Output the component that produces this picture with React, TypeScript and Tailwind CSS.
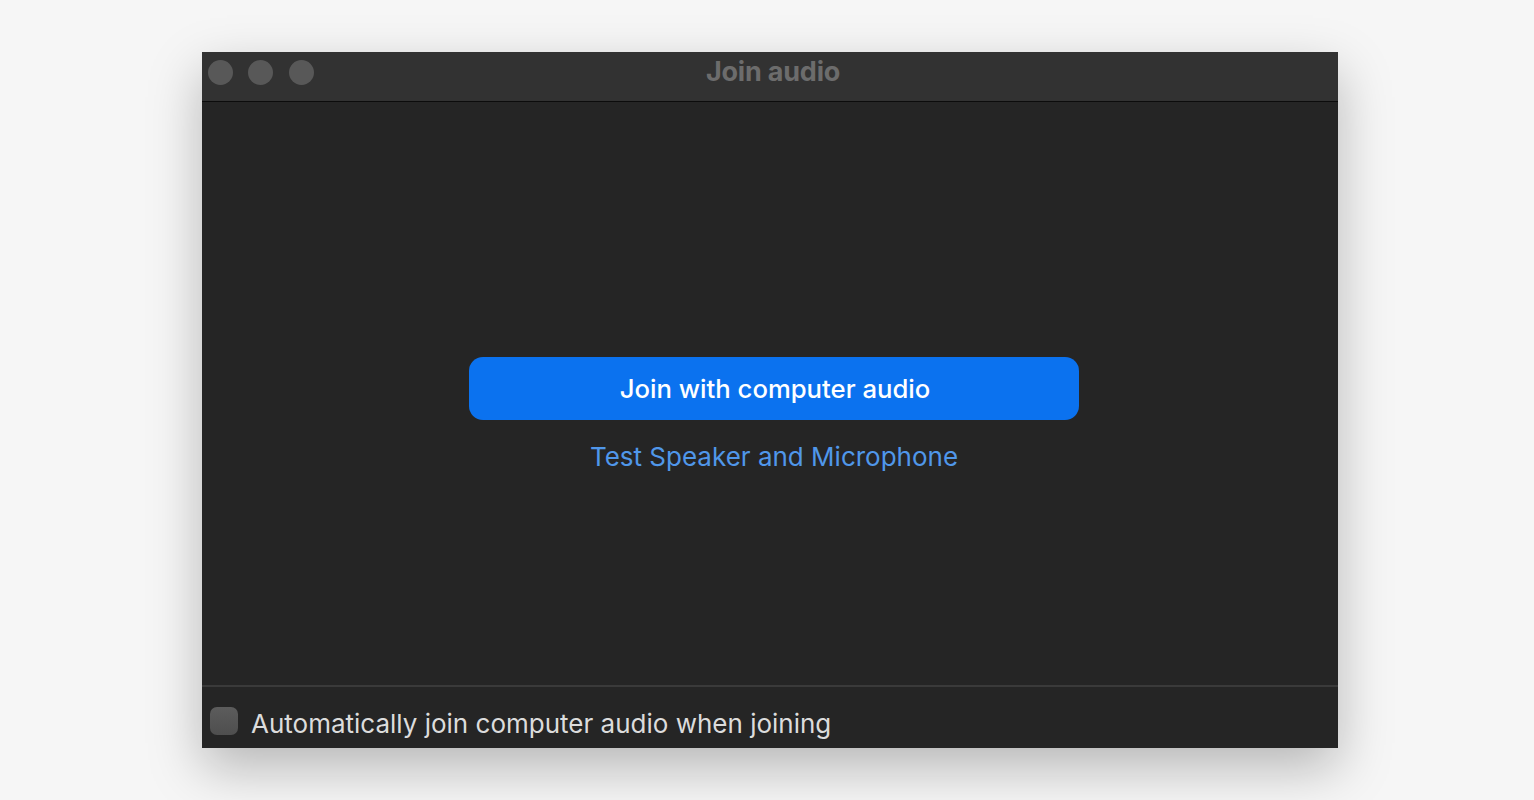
export default function App() {
  return (
    <div className="flex h-[800px] w-full items-start justify-center overflow-hidden bg-[#f6f6f6] pt-[52px] pl-[6px] font-['Inter','Liberation_Sans',sans-serif]">
      <div className="flex h-[696px] w-[1136px] flex-col bg-[#252525] shadow-[0_20px_50px_rgba(0,0,0,0.26)]">
        <div className="relative flex h-[50px] shrink-0 items-center gap-[15.5px] border-b border-b-[#0c0c0c] bg-[#323232] pb-[8px] pl-[5.5px]">
          <span className="size-[25px] rounded-full bg-[#585858]" />
          <span className="size-[25px] rounded-full bg-[#585858]" />
          <span className="size-[25px] rounded-full bg-[#585858]" />
          <span className="absolute inset-x-0 top-[3px] pl-[6px] text-center text-[27px] leading-[34px] font-bold tracking-[-0.2px] text-[#6c6c6c]">
            Join audio
          </span>
        </div>

        <div className="flex flex-1 flex-col items-center justify-center pt-[43px] pl-[8px]">
          <button className="h-[63px] w-[610px] rounded-[14px] bg-[#0b72ef] pt-[2px] pl-[2px] text-[25.7px] font-[450] text-white">
            Join with computer audio
          </button>
          <a className="mt-[20px] text-[26px] leading-[34px] text-[#5097ea]">Test Speaker and Microphone</a>
        </div>

        <div className="flex h-[63px] shrink-0 items-center gap-[13px] border-t-2 border-t-[#3a3a3a] pt-[12px] pl-[8px]">
          <span className="mb-[6px] size-[28px] rounded-[7px] bg-gradient-to-b from-[#5c5c5c] to-[#4e4e4e]" />
          <span className="text-[26px] leading-[34px] text-[#dcdcdc]">Automatically join computer audio when joining</span>
        </div>
      </div>
    </div>
  );
}
